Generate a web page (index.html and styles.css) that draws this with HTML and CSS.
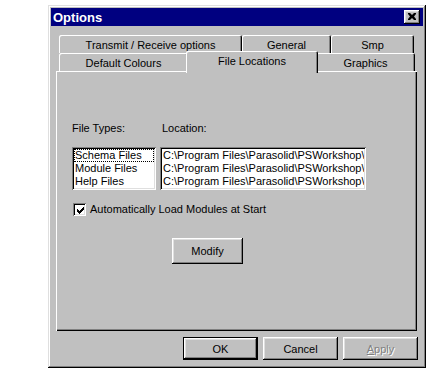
FILE: index.html
```html
<!DOCTYPE html>
<html>
<head>
<meta charset="utf-8">
<link rel="stylesheet" href="styles.css">
</head>
<body>
<div class="dialog">
  <div class="titlebar">
    <span class="title">Options</span>
    <span class="close"><svg width="8" height="7" viewBox="0 0 8 7"><path d="M0 0h2l2 2 2-2h2v1L6 3.5 8 6v1H6L4 5 2 7H0V6l2-2.5L0 1z" fill="#000"/></svg></span>
  </div>
  <div class="tabs">
    <div class="tabrow back">
      <div class="tab w183">Transmit / Receive options</div>
      <div class="tab w89">General</div>
      <div class="tab w83">Smp</div>
    </div>
    <div class="tabrow front">
      <div class="tab w129">Default Colours</div>
      <div class="tab sel">File Locations</div>
      <div class="tab w99">Graphics</div>
    </div>
  </div>
  <div class="panel">
    <div class="grid">
      <div class="lbl">File Types:</div>
      <div class="lbl lbl2">Location:</div>
      <div class="list">
        <div class="item focus">Schema Files</div>
        <div class="item">Module Files</div>
        <div class="item">Help Files</div>
      </div>
      <div class="list">
        <div class="item">C:\Program Files\Parasolid\PSWorkshop\</div>
        <div class="item">C:\Program Files\Parasolid\PSWorkshop\</div>
        <div class="item">C:\Program Files\Parasolid\PSWorkshop\</div>
      </div>
    </div>
    <div class="check">
      <span class="box"><svg width="7" height="7" viewBox="0 0 7 7"><path d="M0 2h1v1h1v1h1V3h1V2h1V1h1V0h1v3H6v1H5v1H4v1H3v1H2V6H1V5H0z" fill="#000"/></svg></span>
      <span>Automatically Load Modules at Start</span>
    </div>
    <div class="btn modify">Modify</div>
  </div>
  <div class="buttons">
    <div class="btn def">OK</div>
    <div class="btn">Cancel</div>
    <div class="btn dis"><span><u>A</u>pply</span></div>
  </div>
</div>
</body>
</html>
```
FILE: styles.css
```css
body {
  margin: 0;
  background: #fff;
  font-family: "Liberation Sans", Arial, sans-serif;
  font-size: 11px;
  color: #000;
}
.dialog {
  margin: 5px 0 0 48px;
  width: 378px;
  height: 363px;
  box-sizing: border-box;
  padding: 3px;
  background: #c0c0c0;
  box-shadow: inset -1px -1px #000, inset 1px 1px #dfdfdf, inset -2px -2px #808080, inset 2px 2px #fff;
}
.titlebar {
  height: 18px;
  background: #000080;
  display: flex;
  align-items: center;
  justify-content: space-between;
  padding: 0 3px 0 2px;
}
.title {
  color: #fff;
  font-weight: bold;
  font-size: 13px;
}
.close {
  width: 16px;
  height: 14px;
  box-sizing: border-box;
  background: #c0c0c0;
  box-shadow: inset -1px -1px #000, inset 1px 1px #fff, inset -2px -2px #808080, inset 2px 2px #dfdfdf;
  display: flex;
  align-items: center;
  justify-content: center;
  padding: 0 1px 1px 0;
}
.tabs {
  margin-top: 9px;
  padding-left: 8px;
}
.tabrow {
  display: flex;
  height: 18px;
}
.tab {
  height: 18px;
  box-sizing: border-box;
  display: flex;
  align-items: center;
  justify-content: center;
  padding-top: 1px;
  background: #c0c0c0;
  border-radius: 2px 2px 0 0;
  box-shadow: inset 1px 1px #fff, inset -1px 0 #000, inset -2px 0 #808080;
}
.w183 { width: 183px; }
.w89 { width: 89px; }
.w83 { width: 83px; }
.w129 { width: 129px; }
.w99 { width: 99px; }
.tab.sel {
  width: 132px;
  height: 22px;
  margin: -2px -2px -2px -2px;
  position: relative;
  z-index: 2;
  padding-bottom: 3px;
}
.panel {
  position: relative;
  z-index: 1;
  margin-left: 5px;
  width: 361px;
  height: 260px;
  box-sizing: border-box;
  padding: 51px 0 0 16px;
  background: #c0c0c0;
  box-shadow: inset 1px 1px #fff, inset -1px -1px #000, inset -2px -2px #808080;
}
.grid {
  display: grid;
  grid-template-columns: 84px 206px;
  column-gap: 4px;
  row-gap: 12px;
}
.lbl {
  line-height: 13px;
}
.lbl2 {
  padding-left: 2px;
}
.list {
  height: 43px;
  box-sizing: border-box;
  background: #fff;
  padding: 2px;
  box-shadow: inset 1px 1px #808080, inset -1px -1px #fff, inset 2px 2px #000, inset -2px -2px #dfdfdf;
  overflow: hidden;
}
.item {
  height: 13px;
  line-height: 13px;
  padding-left: 1px;
  white-space: nowrap;
  overflow: hidden;
}
.item.focus {
  outline: 1px dotted #000;
  outline-offset: -1px;
}
.check {
  margin-top: 13px;
  display: flex;
  align-items: center;
  gap: 4px;
  padding-left: 1px;
  line-height: 13px;
}
.box {
  width: 13px;
  height: 13px;
  box-sizing: border-box;
  background: #fff;
  display: flex;
  align-items: center;
  justify-content: center;
  box-shadow: inset 1px 1px #808080, inset -1px -1px #fff, inset 2px 2px #000, inset -2px -2px #dfdfdf;
}
.box svg { margin: 1px 0 0 1px; }
.btn {
  width: 75px;
  height: 23px;
  box-sizing: border-box;
  display: flex;
  align-items: center;
  justify-content: center;
  background: #c0c0c0;
  box-shadow: inset -1px -1px #000, inset 1px 1px #fff, inset -2px -2px #808080, inset 2px 2px #dfdfdf;
}
.btn.def {
  box-shadow: inset 0 0 0 1px #000, inset -2px -2px #000, inset 2px 2px #fff, inset -3px -3px #808080, inset 3px 3px #dfdfdf;
}
.btn.dis {
  color: #808080;
  text-shadow: 1px 1px #fff;
}
.modify {
  width: 71px;
  height: 26px;
  margin: 22px 0 0 100px;
}
.buttons {
  display: flex;
  justify-content: flex-end;
  gap: 5px;
  margin-top: 6px;
  padding-right: 5px;
}
```
